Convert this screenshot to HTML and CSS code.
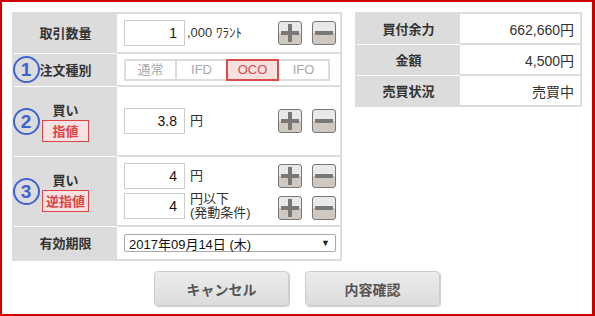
FILE: index.html
```html
<!DOCTYPE html>
<html lang="ja">

<head>
    <meta charset="UTF-8">
    <title>注文入力</title>
    <link rel="stylesheet" href="styles.css">
</head>

<body>
    <div class="frame">
        <div class="top">
            <div class="order">
                <div class="row row-qty">
                    <div class="label"><span class="label-text">取引数量</span></div>
                    <div class="value">
                        <input type="text" class="num" value="1" />
                        <span class="unit">,000 ﾜﾗﾝﾄ</span>
                        <span class="spacer"></span>
                        <button type="button" class="step"><svg viewBox="0 0 22 22"><path d="M9 2h4v18H9zM2 9h18v4H2z" /></svg></button>
                        <button type="button" class="step"><svg viewBox="0 0 22 22"><path d="M2 9h18v4H2z" /></svg></button>
                    </div>
                </div>
                <div class="row row-type">
                    <div class="label"><span class="circle">1</span><span class="label-text">注文種別</span></div>
                    <div class="value">
                        <div class="segments">
                            <span class="seg">通常</span>
                            <span class="seg">IFD</span>
                            <span class="seg active">OCO</span>
                            <span class="seg">IFO</span>
                        </div>
                    </div>
                </div>
                <div class="row row-big">
                    <div class="label">
                        <span class="circle">2</span>
                        <div class="label-stack">
                            <span class="label-text">買い</span>
                            <span class="tag">指値</span>
                        </div>
                    </div>
                    <div class="value">
                        <input type="text" class="num" value="3.8" />
                        <span class="unit">円</span>
                        <span class="spacer"></span>
                        <button type="button" class="step"><svg viewBox="0 0 22 22"><path d="M9 2h4v18H9zM2 9h18v4H2z" /></svg></button>
                        <button type="button" class="step"><svg viewBox="0 0 22 22"><path d="M2 9h18v4H2z" /></svg></button>
                    </div>
                </div>
                <div class="row row-big">
                    <div class="label">
                        <span class="circle">3</span>
                        <div class="label-stack">
                            <span class="label-text">買い</span>
                            <span class="tag">逆指値</span>
                        </div>
                    </div>
                    <div class="value value-stack">
                        <div class="line">
                            <input type="text" class="num" value="4" />
                            <span class="unit">円</span>
                            <span class="spacer"></span>
                            <button type="button" class="step"><svg viewBox="0 0 22 22"><path d="M9 2h4v18H9zM2 9h18v4H2z" /></svg></button>
                            <button type="button" class="step"><svg viewBox="0 0 22 22"><path d="M2 9h18v4H2z" /></svg></button>
                        </div>
                        <div class="line">
                            <input type="text" class="num" value="4" />
                            <span class="unit">円以下<br />(発動条件)</span>
                            <span class="spacer"></span>
                            <button type="button" class="step step-low"><svg viewBox="0 0 22 22"><path d="M9 2h4v18H9zM2 9h18v4H2z" /></svg></button>
                            <button type="button" class="step step-low"><svg viewBox="0 0 22 22"><path d="M2 9h18v4H2z" /></svg></button>
                        </div>
                    </div>
                </div>
                <div class="row row-date">
                    <div class="label"><span class="label-text">有効期限</span></div>
                    <div class="value">
                        <div class="select"><span>2017年09月14日 (木)</span><span class="arrow">▼</span></div>
                    </div>
                </div>
            </div>

            <div class="status">
                <div class="row">
                    <div class="label">買付余力</div>
                    <div class="value">662,660円</div>
                </div>
                <div class="row">
                    <div class="label">金額</div>
                    <div class="value">4,500円</div>
                </div>
                <div class="row">
                    <div class="label">売買状況</div>
                    <div class="value">売買中</div>
                </div>
            </div>
        </div>

        <div class="actions">
            <button type="button" class="btn">キャンセル</button>
            <button type="button" class="btn">内容確認</button>
        </div>
    </div>
</body>

</html>
```

FILE: styles.css
```css
body {
    margin: 0;
    font-family: "Liberation Sans", "Noto Sans CJK JP", sans-serif;
    color: #333;
}

.frame {
    box-sizing: border-box;
    width: 595px;
    height: 316px;
    border: 2px solid #cc0000;
    border-right-width: 3px;
    padding: 10px;
    background-color: #fff;
}

.top {
    display: flex;
    align-items: flex-start;
    gap: 13px;
}

/* 注文入力テーブル */
.order {
    width: 330px;
    box-sizing: border-box;
    border: 2px solid #dcdcdc;
}

.row {
    display: grid;
    grid-template-columns: 103px 1fr;
}

.row + .row {
    border-top: 2px solid #dcdcdc;
}

.row + .row .label {
    box-shadow: 0 -1px 0 #fff;
}

.label {
    background-color: #dcdcdc;
    font-family: "Noto Sans CJK JP", sans-serif;
    font-weight: bold;
    font-size: 13px;
    color: #333;
    white-space: nowrap;
}

.order .label {
    display: grid;
    grid-template-columns: 25px 1fr 25px;
    align-items: center;
    justify-items: center;
}

.order .label-text,
.order .label-stack {
    grid-column: 2;
}

.label-stack {
    display: flex;
    flex-direction: column;
    align-items: center;
    gap: 1px;
}

.label-text {
    line-height: 18px;
}

.circle {
    grid-column: 1;
    box-sizing: border-box;
    width: 27px;
    height: 27px;
    margin-left: -1px;
    border: 2px solid #3e63d2;
    border-radius: 50%;
    color: #3e63d2;
    font-family: "Liberation Sans", sans-serif;
    font-size: 19px;
    font-weight: bold;
    line-height: 23px;
    text-align: center;
}

.tag {
    box-sizing: border-box;
    width: 47px;
    height: 22px;
    line-height: 20px;
    border: 1px solid #dd4444;
    background-color: #f7e1e1;
    color: #dd4444;
    text-align: center;
}

.value {
    display: flex;
    align-items: center;
    padding: 0 4px 0 7px;
    font-size: 13px;
}

.row-qty { height: 38px; }
.row-type { height: 31px; }
.row-big { height: 68px; }
.row-date { height: 32px; }

.num {
    box-sizing: border-box;
    width: 61px;
    height: 26px;
    border: 1px solid #cccccc;
    padding: 0 7px;
    text-align: right;
    font-family: "Liberation Sans", sans-serif;
    font-size: 14px;
    color: #111;
}

.unit {
    margin-left: 5px;
    line-height: 14px;
    color: #333;
}

.row-qty .unit {
    margin-left: 2px;
}

.spacer {
    flex: 1;
}

.step {
    box-sizing: border-box;
    width: 24px;
    height: 24px;
    padding: 0;
    margin-left: 10px;
    border: 1px solid #777;
    border-radius: 3px;
    background: linear-gradient(#e9e9e9 50%, #cfc9c1 50%);
    cursor: pointer;
}

.step svg {
    display: block;
    width: 22px;
    height: 22px;
    fill: #787878;
}

.step-low {
    margin-top: 4px;
}

.value-stack {
    flex-direction: column;
    align-items: stretch;
    justify-content: center;
    gap: 3px;
}

.line {
    display: flex;
    align-items: center;
}

.segments {
    display: flex;
}

.seg {
    box-sizing: border-box;
    width: 53px;
    height: 22px;
    line-height: 18px;
    border: 2px solid #dcdcdc;
    margin-left: -2px;
    text-align: center;
    color: #aaa;
    font-size: 13px;
}

.seg:first-child {
    margin-left: 0;
}

.seg.active {
    position: relative;
    border-color: #d94c4c;
    background-color: #f6e0e0;
    color: #d94c4c;
}

.select {
    box-sizing: border-box;
    display: flex;
    justify-content: space-between;
    align-items: center;
    width: 212px;
    height: 18px;
    padding: 0 5px 0 4px;
    border: 1px solid #a9a9a9;
    border-radius: 2px;
    font-size: 13px;
    color: #111;
}

.arrow {
    font-size: 9px;
    color: #222;
}

/* 余力テーブル */
.status {
    width: 228px;
    box-sizing: border-box;
    border: 2px solid #dcdcdc;
}

.status .row {
    height: 29px;
}

.status .label {
    display: flex;
    align-items: center;
    justify-content: center;
}

.status .value {
    justify-content: flex-end;
    padding: 0 6px 0 0;
    font-size: 14px;
    color: #333;
}

/* ボタン */
.actions {
    display: flex;
    justify-content: center;
    gap: 16px;
    margin-top: 10px;
}

.btn {
    width: 135px;
    height: 35px;
    border: 1px solid #cccccc;
    border-radius: 4px;
    background: linear-gradient(#ececec, #dcdcdc);
    box-shadow: 1px 1px 1px rgba(0, 0, 0, 0.2);
    font-family: "Noto Sans CJK JP", sans-serif;
    font-weight: bold;
    font-size: 14px;
    color: #555;
    cursor: pointer;
}
```
